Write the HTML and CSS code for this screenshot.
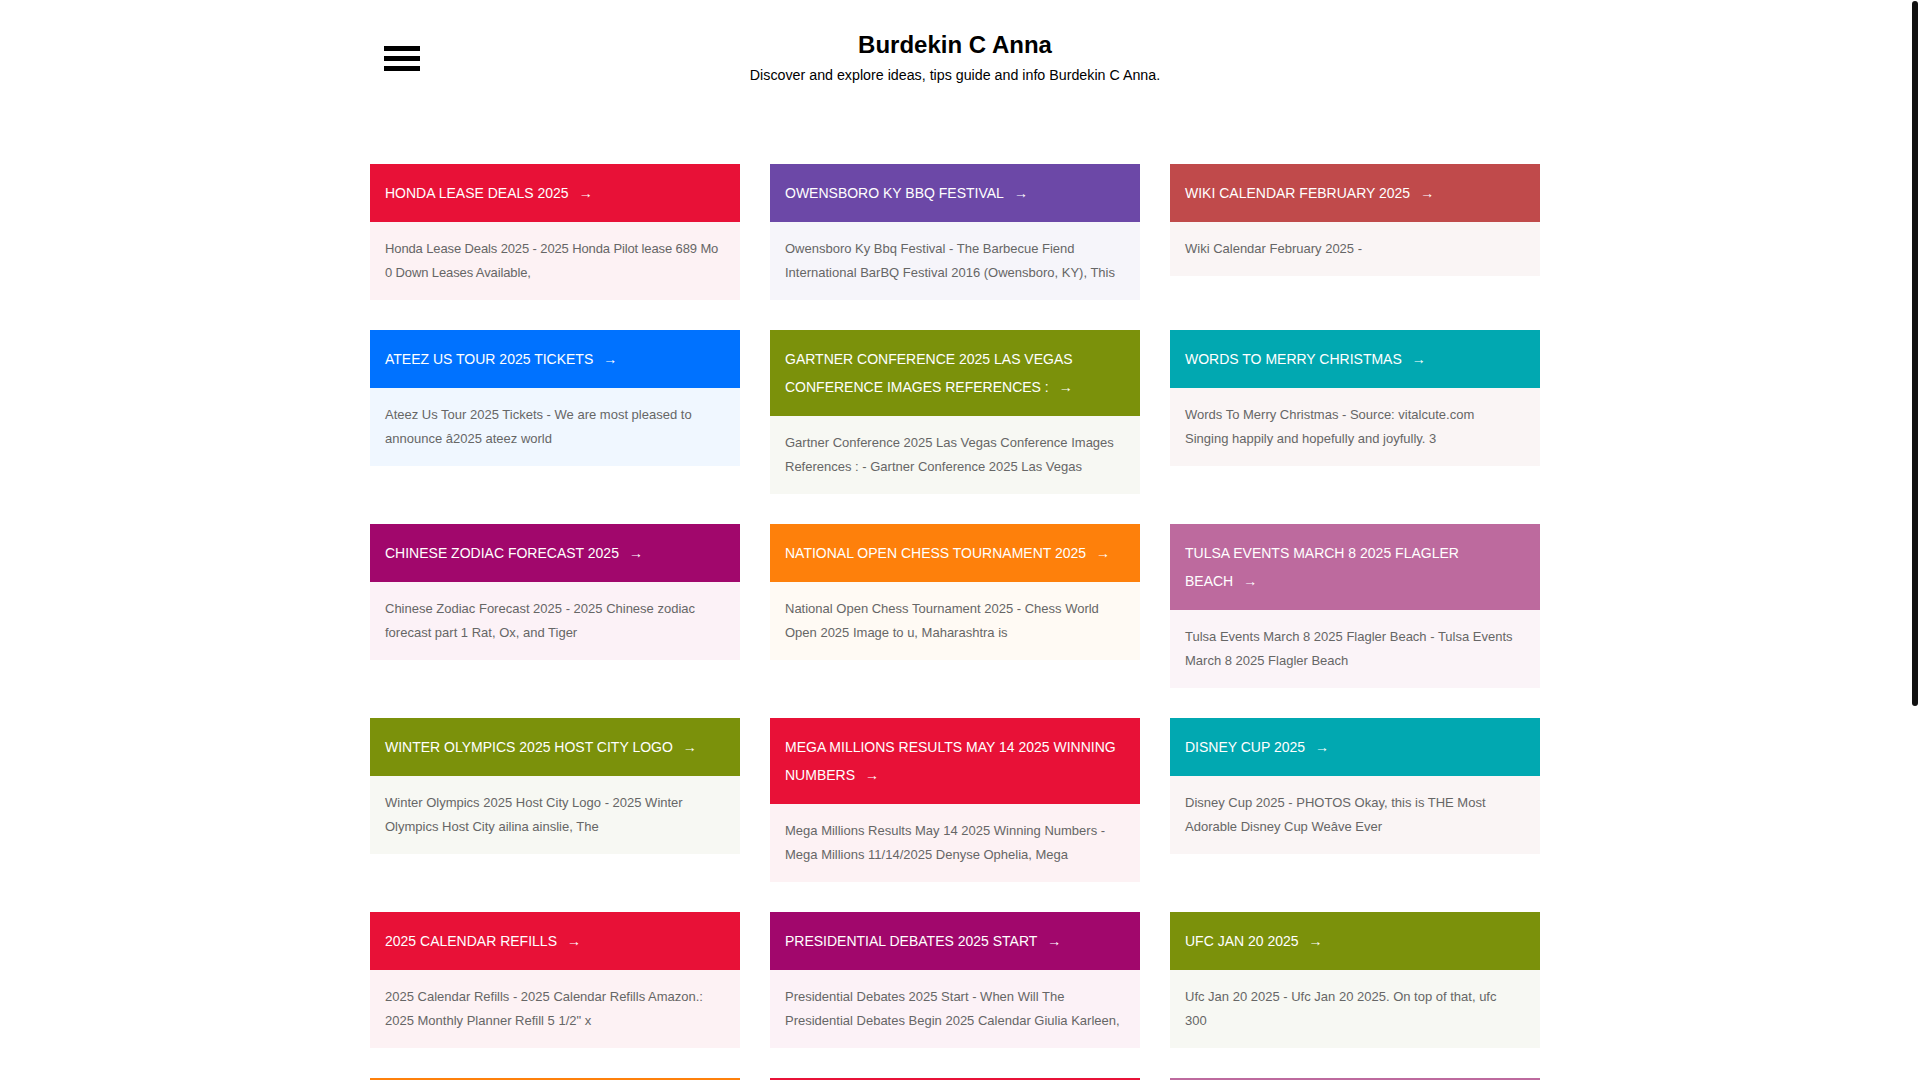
FILE: index.html
```html
<!DOCTYPE html>
<html lang="en">
<head>
<meta charset="utf-8">
<title>Burdekin C Anna</title>
<link rel="stylesheet" href="styles.css">
</head>
<body>
<div class="container">
  <header class="site-header">
    <div class="nav-side">
      <button class="menu-toggle" aria-label="Menu"><span></span><span></span><span></span></button>
    </div>
    <div class="brand">
      <h1 class="site-title">Burdekin C Anna</h1>
      <p class="site-desc">Discover and explore ideas, tips guide and info Burdekin C Anna.</p>
    </div>
    <div class="nav-side"></div>
  </header>

  <main class="grid">
    <article class="card red"><h2 class="card-head">HONDA LEASE DEALS 2025<span class="arr">→</span></h2><p class="card-body tight">Honda Lease Deals 2025 - 2025 Honda Pilot lease 689 Mo 0 Down Leases Available,</p></article>
    <article class="card purple"><h2 class="card-head">OWENSBORO KY BBQ FESTIVAL<span class="arr">→</span></h2><p class="card-body">Owensboro Ky Bbq Festival - The Barbecue Fiend International BarBQ Festival 2016 (Owensboro, KY), This</p></article>
    <article class="card brick"><h2 class="card-head">WIKI CALENDAR FEBRUARY 2025<span class="arr">→</span></h2><p class="card-body">Wiki Calendar February 2025 -</p></article>

    <article class="card blue"><h2 class="card-head">ATEEZ US TOUR 2025 TICKETS<span class="arr">→</span></h2><p class="card-body">Ateez Us Tour 2025 Tickets - We are most pleased to announce â2025 ateez world</p></article>
    <article class="card olive"><h2 class="card-head">GARTNER CONFERENCE 2025 LAS VEGAS CONFERENCE IMAGES REFERENCES :<span class="arr">→</span></h2><p class="card-body">Gartner Conference 2025 Las Vegas Conference Images References : - Gartner Conference 2025 Las Vegas</p></article>
    <article class="card teal"><h2 class="card-head">WORDS TO MERRY CHRISTMAS<span class="arr">→</span></h2><p class="card-body">Words To Merry Christmas - Source: vitalcute.com Singing happily and hopefully and joyfully. 3</p></article>

    <article class="card magenta"><h2 class="card-head">CHINESE ZODIAC FORECAST 2025<span class="arr">→</span></h2><p class="card-body">Chinese Zodiac Forecast 2025 - 2025 Chinese zodiac forecast part 1 Rat, Ox, and Tiger</p></article>
    <article class="card orange"><h2 class="card-head">NATIONAL OPEN CHESS TOURNAMENT 2025<span class="arr">→</span></h2><p class="card-body">National Open Chess Tournament 2025 - Chess World Open 2025 Image to u, Maharashtra is</p></article>
    <article class="card mauve"><h2 class="card-head">TULSA EVENTS MARCH 8 2025 FLAGLER BEACH<span class="arr">→</span></h2><p class="card-body">Tulsa Events March 8 2025 Flagler Beach - Tulsa Events March 8 2025 Flagler Beach</p></article>

    <article class="card olive"><h2 class="card-head">WINTER OLYMPICS 2025 HOST CITY LOGO<span class="arr">→</span></h2><p class="card-body">Winter Olympics 2025 Host City Logo - 2025 Winter Olympics Host City ailina ainslie, The</p></article>
    <article class="card red"><h2 class="card-head">MEGA MILLIONS RESULTS MAY 14 2025 WINNING NUMBERS<span class="arr">→</span></h2><p class="card-body">Mega Millions Results May 14 2025 Winning Numbers - Mega Millions 11/14/2025 Denyse Ophelia, Mega</p></article>
    <article class="card teal"><h2 class="card-head">DISNEY CUP 2025<span class="arr">→</span></h2><p class="card-body">Disney Cup 2025 - PHOTOS Okay, this is THE Most Adorable Disney Cup Weâve Ever</p></article>

    <article class="card red"><h2 class="card-head">2025 CALENDAR REFILLS<span class="arr">→</span></h2><p class="card-body">2025 Calendar Refills - 2025 Calendar Refills Amazon.: 2025 Monthly Planner Refill 5 1/2" x</p></article>
    <article class="card magenta"><h2 class="card-head">PRESIDENTIAL DEBATES 2025 START<span class="arr">→</span></h2><p class="card-body">Presidential Debates 2025 Start - When Will The Presidential Debates Begin 2025 Calendar Giulia Karleen,</p></article>
    <article class="card olive"><h2 class="card-head">UFC JAN 20 2025<span class="arr">→</span></h2><p class="card-body">Ufc Jan 20 2025 - Ufc Jan 20 2025. On top of that, ufc 300</p></article>

    <article class="card orange"><h2 class="card-head">HOLIDAY SCHEDULE 2025<span class="arr">→</span></h2><p class="card-body">Holiday Schedule 2025 - 2025 Holiday Schedule printable calendar for the whole year</p></article>
    <article class="card red"><h2 class="card-head">NFL DRAFT 2025 ORDER<span class="arr">→</span></h2><p class="card-body">Nfl Draft 2025 Order - Full first round order of the 2025 NFL Draft, picks and</p></article>
    <article class="card mauve"><h2 class="card-head">EASTER DATE 2025<span class="arr">→</span></h2><p class="card-body">Easter Date 2025 - When is Easter Sunday 2025 and other important dates</p></article>
  </main>

  <footer class="site-footer">
    <p>Copyright © 2025 Burdekin C Anna. All rights reserved.</p>
  </footer>
</div>
<div class="scroll-thumb" aria-hidden="true"></div>
</body>
</html>
```

FILE: styles.css
```css
html {
  background: #fff;
}
::-webkit-scrollbar {
  display: none;
}
body {
  margin: 0;
  padding-right: 10px;
  font-family: "Liberation Sans", Arial, sans-serif;
  color: #000;
}
.scroll-thumb {
  position: fixed;
  top: 1px;
  right: 2px;
  width: 6px;
  height: 705px;
  border-radius: 3px;
  background: #111;
}
.container {
  width: 1170px;
  margin: 0 auto;
}
.site-header {
  display: grid;
  grid-template-columns: 1fr auto 1fr;
  align-items: center;
  padding-top: 31px;
}
.nav-side {
  display: flex;
  align-items: center;
}
.menu-toggle {
  display: flex;
  flex-direction: column;
  gap: 5px;
  margin-left: 14px;
  padding: 0;
  border: 0;
  background: none;
  cursor: pointer;
}
.menu-toggle span {
  display: block;
  width: 36px;
  height: 5px;
  background: #000;
}
.brand {
  text-align: center;
}
.site-title {
  margin: 0;
  font-size: 24px;
  line-height: 28px;
  font-weight: bold;
}
.site-desc {
  margin: 6px 0 0;
  font-size: 14.25px;
  line-height: 20px;
}
.grid {
  display: grid;
  grid-template-columns: repeat(3, 370px);
  gap: 30px;
  align-items: start;
  margin-top: 79px;
}
.card {
  margin: 0;
}
.card-head {
  margin: 0;
  padding: 15px;
  font-size: 14px;
  line-height: 28px;
  font-weight: normal;
  color: #fff;
}
.arr {
  margin-left: 10px;
  font-size: 14px;
}
.card-body {
  margin: 0;
  padding: 15px 20px 15px 15px;
  font-size: 13px;
  line-height: 24px;
  color: #666;
}
.card-body.tight {
  letter-spacing: -0.12px;
}
.red .card-head { background: #e81137; }
.red .card-body { background: #fdf2f4; }
.purple .card-head { background: #6c48a7; }
.purple .card-body { background: #f6f5fa; }
.brick .card-head { background: #c04a4b; }
.brick .card-body { background: #faf5f5; }
.blue .card-head { background: #0072ff; }
.blue .card-body { background: #f0f7ff; }
.olive .card-head { background: #7b910b; }
.olive .card-body { background: #f7f8f3; }
.teal .card-head { background: #01a8b1; }
.teal .card-body { background: #faf5f5; }
.magenta .card-head { background: #a1076c; }
.magenta .card-body { background: #fcf2f7; }
.orange .card-head { background: #fe800b; }
.orange .card-body { background: #fffaf4; }
.mauve .card-head { background: #bd6a9e; }
.mauve .card-body { background: #fbf4f8; }
.site-footer {
  margin-top: 30px;
  padding: 180px 0 190px;
  text-align: center;
  font-size: 14px;
  line-height: 20px;
  color: #666;
}
.site-footer p {
  margin: 0;
}
```
